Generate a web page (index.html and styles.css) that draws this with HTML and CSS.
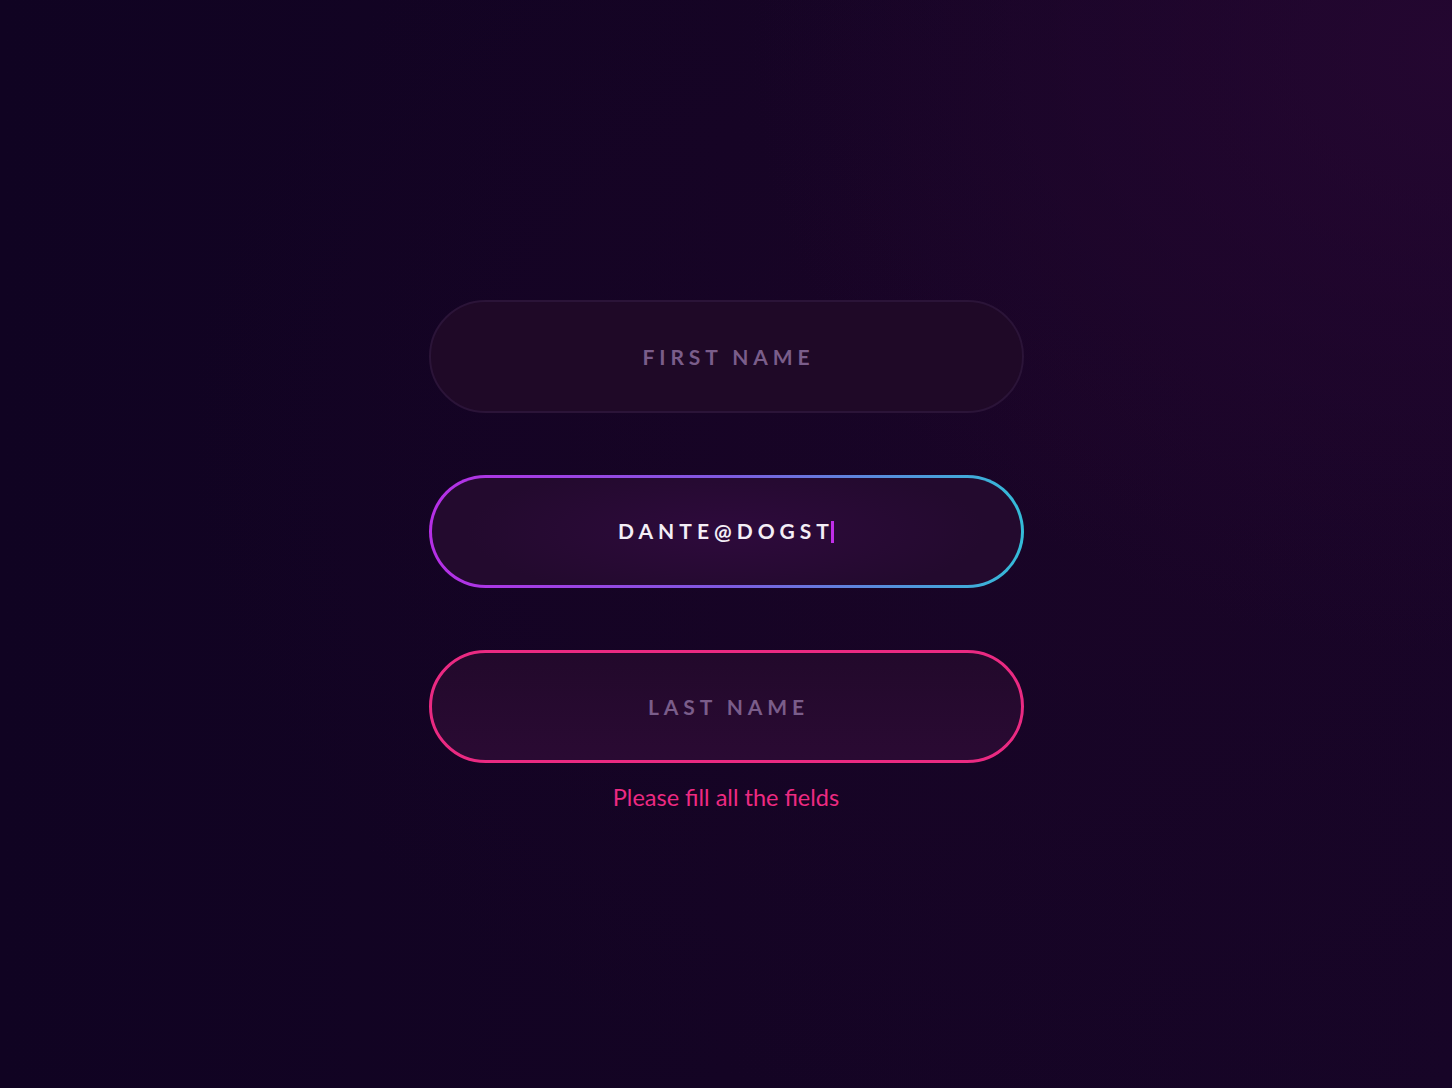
FILE: index.html
```html
<!DOCTYPE html>
<html lang="en">
<head>
<meta charset="utf-8">
<title>Form</title>
<link rel="stylesheet" href="styles.css">
</head>
<body>
<main class="page">
  <form class="form">
    <div class="pill pill-idle"><span class="label">FIRST NAME</span></div>
    <div class="pill pill-active"><span class="value">DANTE@DOGST</span><span class="caret"></span></div>
    <div class="pill pill-error"><span class="label">LAST NAME</span></div>
    <p class="error">Please fill all the fields</p>
  </form>
</main>
</body>
</html>
```
FILE: styles.css
```css
html, body {
  margin: 0;
  padding: 0;
  height: 100%;
}
body {
  background:
    radial-gradient(ellipse 700px 600px at 100% 5%, rgba(38, 7, 50, 0.85) 0%, rgba(38, 7, 50, 0) 100%),
    radial-gradient(ellipse 900px 700px at 75% 40%, rgba(28, 4, 40, 0.6) 0%, rgba(28, 4, 40, 0) 100%),
    linear-gradient(90deg, #100322 0%, #140424 50%, #170527 100%);
  font-family: "Lato", "Open Sans", sans-serif;
  overflow: hidden;
}
.page {
  height: 1088px;
  display: flex;
  justify-content: center;
}
.form {
  margin-top: 300px;
  width: 595px;
  display: flex;
  flex-direction: column;
  gap: 62px;
}
.pill {
  height: 113px;
  box-sizing: border-box;
  border-radius: 57px;
  display: flex;
  align-items: center;
  justify-content: center;
}
.pill-idle {
  background: #1f0927;
  border: 2px solid #2b1438;
}
.pill-active {
  border: 3px solid transparent;
  background:
    radial-gradient(ellipse 260px 70px at 50% 50%, #2e0a3c 0%, #230a2e 100%) padding-box,
    linear-gradient(90deg, #b62fe6 0%, #7e5ae0 50%, #34bcd8 100%) border-box;
}
.pill-error {
  background: linear-gradient(180deg, #22092b 0%, #2a0a33 100%);
  border: 3px solid #ea2a82;
}
.label {
  font-size: 21px;
  font-weight: 700;
  letter-spacing: 4.9px;
  color: #7a5d8a;
  margin-right: -5px;
  margin-top: 0;
}
.value {
  font-size: 21px;
  font-weight: 700;
  letter-spacing: 5px;
  color: #f4eef6;
  margin-top: -2px;
}
.caret {
  width: 3px;
  height: 22px;
  background: #c02ee8;
  margin-left: -3px;
}
.error {
  margin: -42px 0 0;
  text-align: center;
  font-size: 23.5px;
  color: #ee2a82;
  font-weight: 400;
}
```
